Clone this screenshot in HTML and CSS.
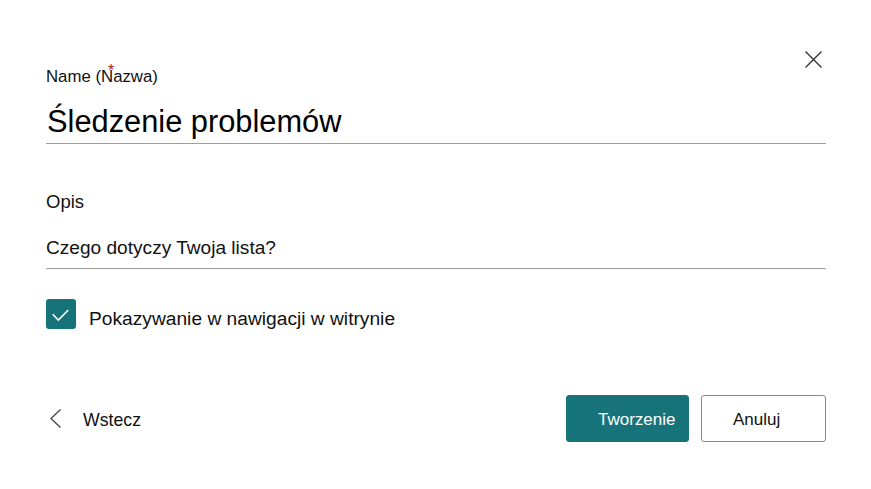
FILE: index.html
```html
<!DOCTYPE html>
<html lang="pl">
<head>
<meta charset="utf-8">
<title>Nowa lista</title>
<link rel="stylesheet" href="styles.css">
</head>
<body>
<div class="dialog">
  <div class="top">
    <label class="name-label">Name (Nazwa)<span class="req">*</span></label>
    <button class="close" aria-label="Zamknij">
      <svg width="17" height="17" viewBox="0 0 17 17"><path d="M0.5 0.5 L16.5 16.5 M16.5 0.5 L0.5 16.5" stroke="#333" stroke-width="1.4" fill="none"/></svg>
    </button>
  </div>
  <div class="title-field">Śledzenie problemów</div>
  <div class="desc-label">Opis</div>
  <div class="desc-field">Czego dotyczy Twoja lista?</div>
  <div class="check-row">
    <span class="checkbox">
      <svg width="30" height="30" viewBox="0 0 30 30"><path d="M6.7 15.3 L12.3 21 L22.3 11" stroke="#fff" stroke-width="1.6" fill="none"/></svg>
    </span>
    <span class="check-label">Pokazywanie w nawigacji w witrynie</span>
  </div>
  <div class="footer">
    <a class="back">
      <svg width="12" height="20" viewBox="0 0 12 20"><path d="M10.5 0.5 L1 9.5 L10.5 18.5" stroke="#444" stroke-width="1.3" fill="none"/></svg>
      <span>Wstecz</span>
    </a>
    <div class="actions">
      <button class="btn primary">Tworzenie</button>
      <button class="btn secondary">Anuluj</button>
    </div>
  </div>
</div>
</body>
</html>
```
FILE: styles.css
```css
html, body {
  margin: 0;
  padding: 0;
  background: #ffffff;
}
body {
  font-family: "Liberation Sans", Arial, sans-serif;
  color: #111;
}
.dialog {
  width: 871px;
  height: 489px;
  box-sizing: border-box;
  padding: 51px 45px 0 46px;
  display: flex;
  flex-direction: column;
}
.top {
  display: flex;
  justify-content: space-between;
  align-items: flex-start;
}
.name-label {
  position: relative;
  margin-top: 16px;
  font-size: 16.8px;
  line-height: 20px;
  color: #111;
}
.req {
  position: absolute;
  left: 62px;
  top: -3px;
  color: #a4262c;
  font-size: 16px;
  line-height: 14px;
}
.close {
  border: 0;
  padding: 0;
  margin: 0 4px 0 0;
  background: none;
  width: 17px;
  height: 17px;
  display: block;
}
.close svg { display: block; }
.title-field {
  margin-top: 17px;
  font-size: 30.8px;
  line-height: 36px;
  padding: 0 0 3px 1px;
  border-bottom: 1px solid #a19f9d;
  color: #000;
}
.desc-label {
  margin-top: 47px;
  font-size: 18.5px;
  line-height: 22px;
  color: #111;
}
.desc-field {
  margin-top: 23px;
  font-size: 19.1px;
  line-height: 24px;
  padding-bottom: 8px;
  border-bottom: 1px solid #a19f9d;
  color: #111;
}
.check-row {
  margin-top: 30px;
  display: flex;
  align-items: flex-start;
  gap: 13px;
}
.checkbox {
  width: 30px;
  height: 30px;
  border-radius: 3px;
  background: #17737a;
  display: block;
  flex: none;
}
.checkbox svg { display: block; }
.check-label {
  margin-top: 8px;
  font-size: 19.2px;
  line-height: 24px;
  color: #111;
}
.footer {
  margin-top: 64px;
  display: flex;
  justify-content: space-between;
  align-items: center;
}
.back {
  display: flex;
  align-items: center;
  gap: 21px;
  margin-left: 4px;
  font-size: 17.7px;
  line-height: 20px;
  color: #111;
}
.back svg { display: block; margin-top: 1px; }
.back span { margin-top: 3px; }
.actions {
  display: flex;
  gap: 12px;
}
.btn {
  height: 47px;
  box-sizing: border-box;
  border-radius: 3px;
  font-family: "Liberation Sans", Arial, sans-serif;
  font-size: 17px;
  line-height: 20px;
  text-align: left;
  padding: 2px 0 0 31px;
  cursor: pointer;
}
.primary {
  width: 123px;
  background: #17737a;
  border: 1px solid #17737a;
  color: #fff;
}
.secondary {
  width: 125px;
  background: #fff;
  border: 1px solid #8a8886;
  color: #111;
}
```
